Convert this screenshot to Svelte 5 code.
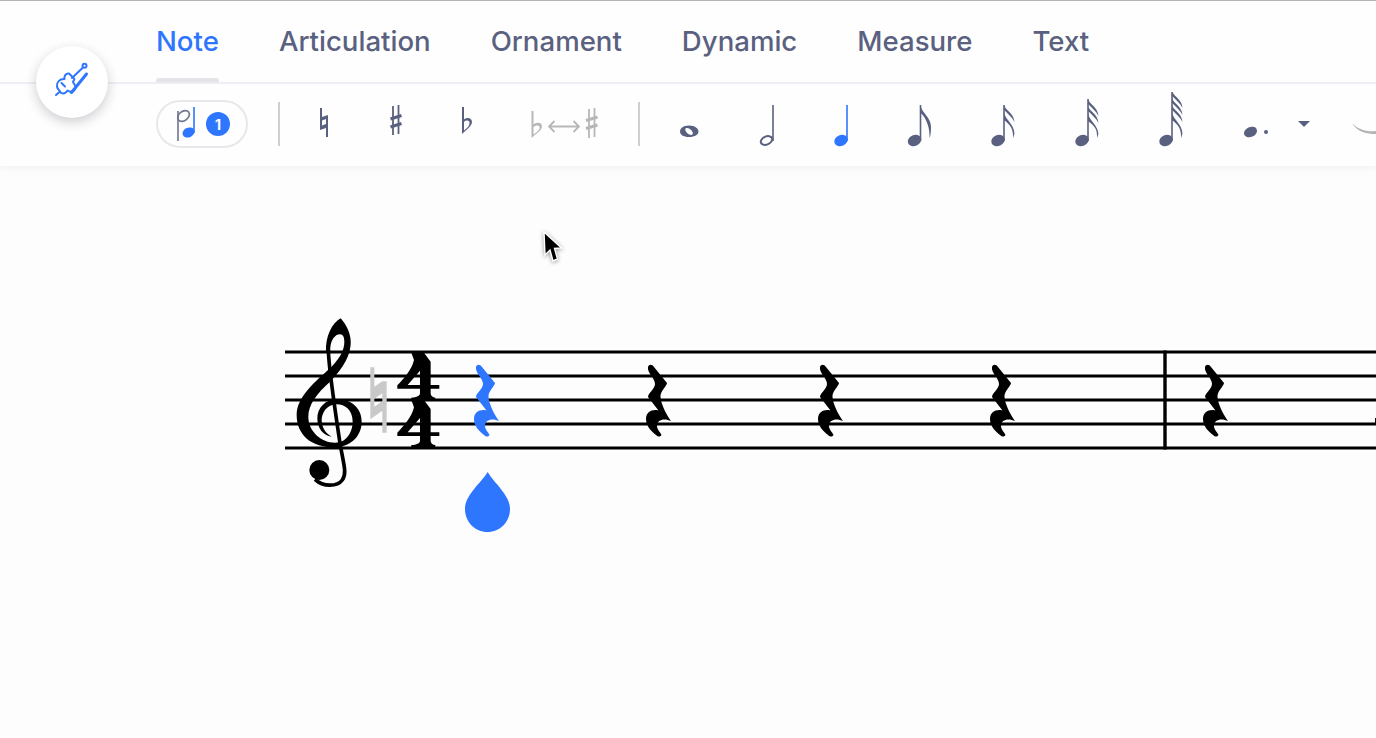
<script>
  const tabs = ['Note', 'Articulation', 'Ornament', 'Dynamic', 'Measure', 'Text'];
  const notes = [
    { start: 885, width: 80, stem: 920.5, top: 105, flags: 1 },
    { start: 965, width: 80, stem: 1004, top: 105, flags: 2 },
    { start: 1045, width: 85, stem: 1088, top: 99, flags: 3 },
    { start: 1130, width: 85, stem: 1172, top: 91, flags: 4 }
  ];
  const flagPath = (x, y, last, bottom) =>
    last
      ? `M${x},${y} C${x + 1},${y + 8} ${x + 10.5},${y + 12} ${x + 10.5},${y + 22} C${x + 10.5},${bottom - 6} ${x + 10},${bottom - 2} ${x + 9},${bottom} C${x + 9.5},${bottom - 10} ${x + 6},${y + 13} ${x},${y + 8} Z`
      : `M${x},${y} C${x + 1},${y + 5} ${x + 10},${y + 8} ${x + 10.5},${y + 17} C${x + 8},${y + 12} ${x + 4},${y + 9} ${x},${y + 5} Z`;
  const rests = [0, 172, 344, 516, 729];
  const restPath = 'M2,3 C3,0 6,0 8,3 L21,19 C21,22 14,27 14.5,33 C15,40 20,50 25,57 C19,54 11,55 11,62 C11,66 15,69 15.5,71 C14,73 12,73 10,71 C5,67 0,62 0,55 C0,48 6,45 12.5,46.5 L2,33 C2,29 9,25 9,20 C9,14 1,9 2,3 Z';
  const four = 'M394,128 H432 L452,155 V225 H478 V236 H452 V250 C452,258 458,262 466,263 V270 H394 V263 C410,262 420,258 420,250 V236 H352 V226 C372,205 395,180 402,150 Z M420,182 L383,225 H420 Z';
</script>

<div class="page">
  <header class="header">
    <nav class="tabs">
      {#each tabs as tab, i}
        <div class="tab" class:active={i === 0}>{tab}</div>
      {/each}
    </nav>
    <div class="toolbar">
      <div class="pill">
        <svg width="28" height="48" viewBox="172 100 28 48">
          <path class="dim" d="M178,141 V111" />
          <ellipse class="dim" cx="183.500" cy="116" rx="6.500" ry="4.600" transform="rotate(-38 183.500 116)" />
          <path class="blue-line" d="M194,107 V133" />
          <ellipse class="blue" cx="188.500" cy="132.500" rx="6.200" ry="4.800" transform="rotate(-24 188.500 132.500)" />
        </svg>
        <span class="badge">1</span>
      </div>
      <span class="divider first"></span>
      <svg class="tool" width="80" height="64" viewBox="280 92 80 64">
        <path class="ink" d="M320,108 H322 V117 L328,115 V137 H326 V128 L320,130 Z M322,120.500 V125.500 L326,124 V119 Z" fill-rule="evenodd" />
      </svg>
      <svg class="tool" width="70" height="64" viewBox="360 92 70 64">
        <path class="ink-line" d="M393,106 V135 M398.500,105 V134" />
        <path class="ink-bar" d="M390.500,119 L401.500,115.500 M390.500,127 L401.500,123.500" />
      </svg>
      <svg class="tool" width="80" height="64" viewBox="430 92 80 64">
        <path class="ink" d="M462,107 h2 v12.500 C466.500,117 472,117.500 472,122 C472,126 466,130 462,134 Z M464,122 v8.500 C466.500,128.500 469.500,126 469.500,123 C469.500,120 466,120 464,122 Z" fill-rule="evenodd" />
      </svg>
      <svg class="tool" width="128" height="64" viewBox="510 92 128 64">
        <path class="off" d="M531.500,111 h2 v13.500 C536,122 542,122 542,126.500 C542,130.500 536,133.500 531.500,138 Z M533.500,127 v7.500 C536,132.500 539.700,130.500 539.700,127.800 C539.700,124.500 535.500,125 533.500,127 Z" fill-rule="evenodd" />
        <path class="off-line" d="M549,126.500 H579 M554.500,121 L549,126.500 L554.500,132 M573.500,121 L579,126.500 L573.500,132" />
        <path class="off-line" d="M589,109 V138 M594.500,108 V137" />
        <path class="off-bar" d="M586,120.500 L597.500,117 M586,128.500 L597.500,125" />
      </svg>
      <span class="divider"></span>
      <svg class="tool" width="90" height="64" viewBox="640 92 90 64">
        <path class="ink" d="M689,125.500 C695,125.500 698.500,128.500 698.500,131.500 C698.500,134.500 695,137 689,137 C683,137 680,134.500 680,131.500 C680,128.500 683,125.500 689,125.500 Z M685.500,128.500 C684.500,130 687,134 690,134.800 C692.500,135.200 693.500,134 692.500,132 C691.500,129.500 687.500,127 685.500,128.500 Z" fill-rule="evenodd" />
      </svg>
      <svg class="tool" width="80" height="64" viewBox="730 92 80 64">
        <path class="stem" d="M773,105 V141" />
        <ellipse class="hollow" cx="766.500" cy="140.500" rx="6" ry="4" transform="rotate(-25 766.500 140.500)" />
      </svg>
      <svg class="tool" width="75" height="64" viewBox="810 92 75 64">
        <path class="blue-line" d="M847,105 V141" />
        <ellipse class="blue" cx="841" cy="140.500" rx="7" ry="5.400" transform="rotate(-24 841 140.500)" />
      </svg>
      {#each notes as n}
        <svg class="tool" width={n.width} height="64" viewBox="{n.start} 92 {n.width} 64">
          <path class="stem" d="M{n.stem},{n.top} V141" />
          {#each Array(n.flags) as _, f}
            <path class="ink" d={flagPath(n.stem, n.top + f * 7, f === n.flags - 1, 138)} />
          {/each}
          <ellipse class="ink" cx={n.stem - 6} cy="140.500" rx="7" ry="5.400" transform="rotate(-24 {n.stem - 6} 140.500)" />
        </svg>
      {/each}
      <svg class="tool" width="70" height="64" viewBox="1215 92 70 64">
        <ellipse class="ink" cx="1250.500" cy="132" rx="6.800" ry="5" transform="rotate(-24 1250.500 132)" />
        <circle class="ink" cx="1266" cy="132" r="2" />
      </svg>
      <svg class="tool" width="40" height="64" viewBox="1285 92 40 64">
        <path class="ink" d="M1298,121 H1310 L1304,127 Z" />
      </svg>
      <svg class="tool" width="51" height="64" viewBox="1325 92 51 64">
        <path class="tie" d="M1352,123 C1358,130 1368,132 1376,131 V134 C1367,134 1357,132 1352,123 Z" />
      </svg>
    </div>
    <div class="fab">
      <svg width="72" height="72" viewBox="36 46 72 72">
        <g class="violin">
          <path d="M69,73.500 C65.500,73 64,76.500 64.500,79 C60,78.500 56.500,82 57,86.500 C57.500,90 60,90 60.500,92.500 C63,94.500 66,93 67.500,90.500 C71,93 75.500,91 75.500,87 C75.500,84.500 73,83.500 73,81.500 C74,80 75.500,79 73,77.500 Z" />
          <path d="M72,78 L83,67.500" />
          <circle cx="84.500" cy="65.800" r="2" />
          <path d="M61.500,83 L65,86.500 M56,95 L60,91.500" />
        </g>
        <path class="bow" d="M71.500,92.500 L86.500,74" />
      </svg>
    </div>
  </header>

  <main class="canvas">
    <svg class="score" width="1376" height="572" viewBox="0 166 1376 572">
      <g class="lines">
        <path d="M285,352 H1376 M285,376 H1376 M285,400 H1376 M285,424 H1376 M285,448 H1376" />
        <path d="M1165,350.500 V449.500" class="bar" />
        <path d="M1375.500,418 V424" class="thin" />
      </g>

      <g transform="translate(280 310) scale(.3333)">
        <path d="M182,25 C200,45 215,75 212,105 C208,150 175,190 150,215 C110,250 85,285 85,320 C85,365 125,398 165,398 C200,398 218,365 218,335 C218,300 195,283 170,283 C140,283 125,310 125,330 C125,355 140,372 155,380 C130,378 112,355 112,325 C112,295 135,268 172,268 C215,268 245,295 245,335 C245,380 210,412 160,412 C95,412 50,375 50,315 C50,260 105,215 155,170 C185,140 197,110 192,85 C190,72 180,70 170,75 C155,85 150,105 151,125 L138,125 C136,80 155,40 182,25 Z" />
        <path class="clef-stem" d="M145,120 C146,165 165,300 180,400 C190,460 202,490 187,510 C172,530 130,532 105,508" />
        <circle cx="118" cy="480" r="30" />

        <path class="accidental" d="M271,172 H283 V230 L307,214 H320 V368 H307 V302 L271,328 Z M283,266 V290 L307,274 V250 Z" fill-rule="evenodd" />

        <path d={four} fill-rule="evenodd" />
        <path transform="translate(0 142)" d={four} fill-rule="evenodd" />
      </g>

      {#each rests as dx, i}
        <path class:note-active={i === 0} transform="translate({474 + dx} 364)" d={restPath} />
      {/each}

      <path class="drop" d="M487.700,472 C494,483 510,495 510,509 C510,522 500,532 487.500,532 C475,532 465,522 465,509 C465,495 481,483 487.700,472 Z" />
    </svg>

    <svg class="cursor" width="24" height="36" viewBox="0 0 24 36">
      <path d="M2,2 L3,25 L8,20 L11,31 L15.500,29 L12.500,18.500 L19.500,18 Z" />
    </svg>
  </main>
</div>

<style>
  :global(body) {
    margin: 0;
    background: #fdfdfd;
    font-family: Inter, "Liberation Sans", sans-serif;
  }
  .page {
    position: relative;
    width: 1376px;
    height: 738px;
    overflow: hidden;
    background: #fdfdfd;
  }
  .header {
    position: relative;
    z-index: 1;
    height: 165px;
    background: #fefefe;
    border-top: 1px solid #b4b4b4;
    box-shadow: 0 1px 8px rgba(40, 40, 60, 0.07);
  }
  .tabs {
    display: flex;
    gap: 60px;
    height: 81px;
    padding-left: 156px;
    border-bottom: 2px solid #eeeef4;
  }
  .tab {
    position: relative;
    font-size: 27.6px;
    font-weight: 450;
    line-height: 81px;
    color: #5a6180;
    white-space: nowrap;
  }
  .tab.active {
    color: #2f76ff;
  }
  .tab.active::after {
    content: '';
    position: absolute;
    left: 0;
    right: 0;
    bottom: 0;
    height: 4px;
    background: #e3e3e8;
    border-radius: 3px 3px 0 0;
  }
  .toolbar {
    display: flex;
    align-items: center;
    height: 80px;
    padding-left: 156px;
    overflow: hidden;
  }
  .pill {
    flex: none;
    display: flex;
    align-items: center;
    gap: 6px;
    box-sizing: border-box;
    width: 92px;
    height: 48px;
    padding-left: 14px;
    border: 2px solid #e8e8ec;
    border-radius: 24px;
  }
  .badge {
    display: flex;
    align-items: center;
    justify-content: center;
    width: 24px;
    height: 24px;
    border-radius: 50%;
    background: #2f76ff;
    color: #fff;
    font-size: 14px;
    font-weight: 700;
  }
  .divider {
    flex: none;
    width: 2px;
    height: 44px;
    background: #cfcfd2;
  }
  .divider.first {
    margin-left: 30px;
  }
  .tool {
    flex: none;
    display: block;
  }
  .ink {
    fill: #5a6180;
  }
  .ink-line {
    stroke: #5a6180;
    stroke-width: 1.8;
    fill: none;
  }
  .ink-bar {
    stroke: #5a6180;
    stroke-width: 3.2;
    fill: none;
  }
  .off {
    fill: #b7b7b9;
  }
  .off-line {
    stroke: #b7b7b9;
    stroke-width: 1.8;
    fill: none;
  }
  .off-bar {
    stroke: #b7b7b9;
    stroke-width: 3.2;
    fill: none;
  }
  .stem {
    stroke: #5a6180;
    stroke-width: 1.6;
    fill: none;
  }
  .hollow {
    fill: none;
    stroke: #5a6180;
    stroke-width: 2;
  }
  .dim {
    stroke: #6e7590;
    stroke-width: 1.6;
    fill: none;
  }
  .blue {
    fill: #2f76ff;
  }
  .blue-line {
    stroke: #2f76ff;
    stroke-width: 1.6;
    fill: none;
  }
  .tie {
    fill: #b4b4b4;
  }
  .fab {
    position: absolute;
    left: 36px;
    top: 45px;
    width: 72px;
    height: 72px;
    border-radius: 50%;
    background: #fff;
    box-shadow: 0 4px 12px rgba(30, 30, 50, 0.22);
  }
  .fab svg {
    display: block;
  }
  .violin {
    fill: none;
    stroke: #2f76ff;
    stroke-width: 2;
    stroke-linecap: round;
    stroke-linejoin: round;
  }
  .bow {
    fill: none;
    stroke: #2f76ff;
    stroke-width: 3;
    stroke-linecap: round;
  }
  .canvas {
    position: relative;
    height: 572px;
  }
  .score {
    display: block;
  }
  .lines path {
    fill: none;
    stroke: #000;
    stroke-width: 3;
  }
  .lines .bar {
    stroke-width: 3.4;
  }
  .lines .thin {
    stroke-width: 1;
  }
  .clef-stem {
    fill: none;
    stroke: #000;
    stroke-width: 11;
  }
  .accidental {
    fill: #c9c9c9;
  }
  .note-active {
    fill: #2f76ff;
  }
  .drop {
    fill: #2f76ff;
  }
  .cursor {
    position: absolute;
    left: 542px;
    top: 64px;
    filter: drop-shadow(0 1px 2px rgba(0, 0, 0, 0.4));
  }
  .cursor path {
    fill: #000;
    stroke: #fff;
    stroke-width: 1.4;
  }
</style>
